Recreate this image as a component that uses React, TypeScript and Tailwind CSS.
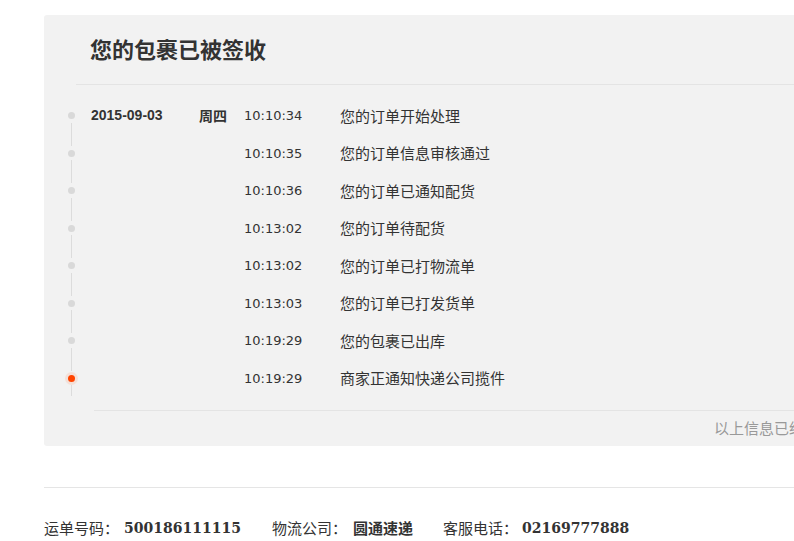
const steps = [
  { time: '10:10:34', text: '您的订单开始处理' },
  { time: '10:10:35', text: '您的订单信息审核通过' },
  { time: '10:10:36', text: '您的订单已通知配货' },
  { time: '10:13:02', text: '您的订单待配货' },
  { time: '10:13:02', text: '您的订单已打物流单' },
  { time: '10:13:03', text: '您的订单已打发货单' },
  { time: '10:19:29', text: '您的包裹已出库' },
  { time: '10:19:29', text: '商家正通知快递公司揽件' },
]

const cjk = '"Noto Sans CJK SC", sans-serif'

export default function App() {
  return (
    <div
      className="h-[541px] w-[794px] overflow-hidden bg-white text-[#333]"
      style={{ fontFamily: `"Liberation Sans", ${cjk}` }}
    >
      <div className="ml-[44px] w-[1100px] pt-[15px]">
        <section className="rounded-[3px] bg-[#f2f2f2] pb-[8px]">
          <h1
            className="pl-[46px] pt-[18px] text-[22px] font-bold leading-[30px] text-[#333]"
            style={{ fontFamily: cjk }}
          >
            您的包裹已被签收
          </h1>
          <div className="ml-[32px] mt-[21px] h-px bg-[#e4e4e4]" />

          <ul className="mt-[12px] pl-[24px]">
            {steps.map((s, i) => {
              const last = i === steps.length - 1
              return (
                <li key={i} className="flex h-[37.5px] items-center">
                  <div className="relative flex h-full w-[7px] shrink-0 items-center justify-center">
                    <span
                      className={
                        last
                          ? 'size-[7px] rounded-full bg-[#ff4400] ring-[3px] ring-[#ff4400]/10'
                          : 'size-[7px] rounded-full bg-[#d9d9d9]'
                      }
                    />
                    <span
                      className={
                        last
                          ? 'absolute left-[3px] top-[calc(50%+7px)] h-[11px] w-px bg-[#dcdcdc]'
                          : 'absolute left-[3px] top-[calc(50%+7px)] h-[23px] w-px bg-[#dcdcdc]'
                      }
                    />
                  </div>
                  <span className="ml-[16px] w-[108px] shrink-0 text-[14px] font-bold">
                    {i === 0 ? '2015-09-03' : ''}
                  </span>
                  <span className="w-[45px] shrink-0 text-[14px] font-bold" style={{ fontFamily: cjk }}>
                    {i === 0 ? '周四' : ''}
                  </span>
                  <span
                    className="w-[96px] shrink-0 text-[13px]"
                    style={{ fontFamily: '"DejaVu Sans", sans-serif' }}
                  >
                    {s.time}
                  </span>
                  <span className="text-[15px]" style={{ fontFamily: cjk }}>
                    {s.text}
                  </span>
                </li>
              )
            })}
          </ul>

          <div className="ml-[50px] mt-[13px] h-px bg-[#e4e4e4]" />
          <p
            className="mt-[7px] whitespace-nowrap pl-[670px] text-[15px] leading-[20px] text-[#999]"
            style={{ fontFamily: cjk }}
          >
            以上信息已经由物流公司提供，如有疑问请查询圆通速递官方网站
          </p>
        </section>

        <div className="mt-[41px] h-px bg-[#e5e5e5]" />

        <div className="mt-[30px] flex items-center whitespace-nowrap text-[15px] leading-[20px]" style={{ fontFamily: cjk }}>
          <span>运单号码：</span>
          <span
            className="ml-[5px] mr-[31px] text-[14px] font-bold"
            style={{ fontFamily: '"DejaVu Serif", serif' }}
          >
            500186111115
          </span>
          <span>物流公司：</span>
          <span className="ml-[6px] mr-[30px] font-bold">圆通速递</span>
          <span>客服电话：</span>
          <span
            className="ml-[4px] text-[14px] font-bold"
            style={{ fontFamily: '"DejaVu Serif", serif' }}
          >
            02169777888
          </span>
        </div>
      </div>
    </div>
  )
}
